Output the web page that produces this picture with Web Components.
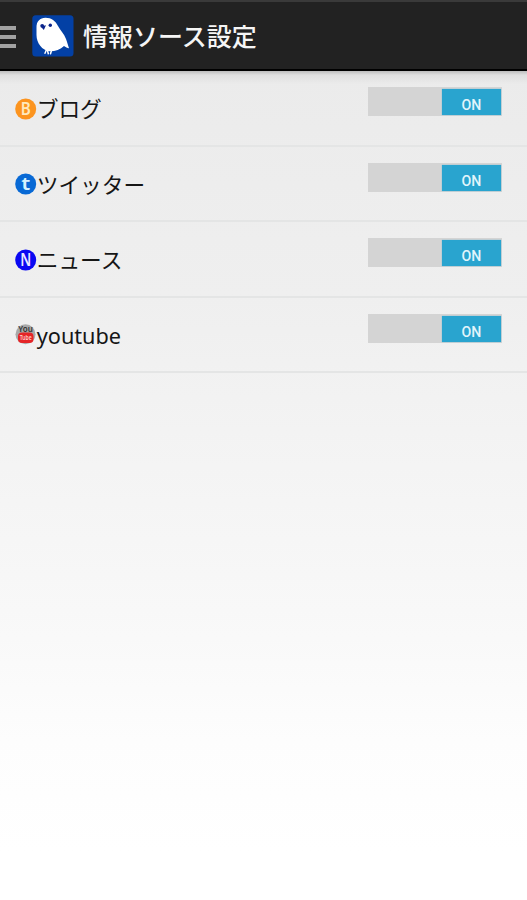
<!DOCTYPE html>
<html lang="ja">
<head>
<meta charset="utf-8">
<title>情報ソース設定</title>
<style>
html, body { margin: 0; height: 100%; }
body { font-family: "Noto Sans", "Noto Sans CJK JP", sans-serif; overflow: hidden; }
</style>
</head>
<body>
<settings-screen></settings-screen>
<script>
const define = (name, html) => customElements.define(name, class extends HTMLElement {
  constructor() {
    super();
    const t = document.createElement('template');
    t.innerHTML = html;
    this.attachShadow({ mode: 'open' }).append(t.content.cloneNode(true));
  }
});

define('app-logo', `
<style>:host{display:block;width:42px;height:42px} svg{display:block}</style>
<svg width="42" height="42" viewBox="0 0 42 42">
  <rect x=".3" y=".3" width="41.200" height="41.200" rx="3.500" fill="#0340a5"/>
  <path d="M4.500 13C4.200 6.500 8 2.800 13.500 2.800C19.500 2.800 23.500 6 26 11C28.500 15.500 32 18.500 34 24C35.200 27.500 36.200 30.500 37 33.300C35.500 33 33.500 32 32 31C28.500 34.500 23.500 36.200 18 36.200C10 35.500 4.500 28 4.500 20Z" fill="#fff"/>
  <path d="M14.300 35L13 38.200M15.500 35.500L16.300 38.800M19.500 35.500L18.500 38.800" stroke="#fff" stroke-width="1.500" stroke-linecap="round"/>
  <circle cx="10.200" cy="10.800" r="1.900" fill="#0b258c"/><circle cx="18.300" cy="10.300" r="1.700" fill="#0b258c"/>
  <path d="M8.800 11.400L14 10.200L11.800 15Z" fill="#0b258c"/>
</svg>`);

define('app-bar', `
<style>
:host{display:flex;align-items:center;box-sizing:border-box;height:71px;padding-top:1px;background:#222;border-top:2px solid #3a3a3a;border-bottom:2px solid #000;color:#f5f5f5}
.menu{width:16px;height:22px;display:flex;flex-direction:column;justify-content:space-between;margin:2px 16px 0 0}
.menu i{height:4px;background:#a2a2a2}
h1{margin:-2px 0 0 9px;font:500 25px/36px "Noto Sans CJK JP",sans-serif;white-space:nowrap}
</style>
<div class="menu"><i></i><i></i><i></i></div><app-logo></app-logo><h1><slot></slot></h1>`);

define('source-badge', `
<style>
:host{display:block;flex:none;width:22px;height:22px}
</style><slot></slot>`);

define('toggle-switch', `
<style>
:host{display:flex;box-sizing:border-box;width:134px;height:29px;background:#d4d4d4;justify-content:flex-end;padding:2px 1px 1px 0}
.thumb{box-sizing:border-box;width:59px;height:26px;background:#29a4cf;box-shadow:0 0 1px #58b4d3;color:#e2f5fb;text-align:center;font:500 14.200px/33px Roboto,sans-serif}
</style><div class="thumb"><slot></slot></div>`);

define('source-row', `
<style>
:host{display:flex;box-sizing:border-box;height:75.500px;padding:0 25px 0 15px;border-bottom:2px solid #e4e5e5;align-items:flex-start}
.icon{margin-top:26.500px}
.label{flex:1;margin:20px 0 0 -.3px;font-size:21.700px;line-height:36px;color:#161616;white-space:nowrap}
.state{margin-top:16px}
</style>
<div class="icon"><slot name="icon"></slot></div><div class="label"><slot></slot></div>
<toggle-switch class="state">ON</toggle-switch>`);

define('settings-screen', `
<style>
:host{display:flex;flex-direction:column;height:100vh}
main{flex:1;padding-top:.4px;background:linear-gradient(#bcbcbc 0,rgba(215,215,215,.6) 4px,rgba(230,230,230,0) 13px),linear-gradient(#ebebeb 0,#efefef 225px,#f3f3f3 360px,#f8f8f8 540px,#fdfdfd 670px,#fff 780px)}
svg{display:block;overflow:visible}
text{font-family:"Noto Sans",sans-serif;fill:#fff;text-anchor:middle}
</style>
<app-bar>情報ソース設定</app-bar>
<main>
<source-row><source-badge slot="icon"><svg width="22" height="22"><circle cx="10.700" cy="11" r="10.500" fill="#fc941f"/><text x="10.700" y="17" font-size="17" font-weight="600" textLength="10" lengthAdjust="spacingAndGlyphs" style="fill:#ffe9bd">B</text></svg></source-badge>ブログ</source-row>
<source-row><source-badge slot="icon"><svg width="22" height="22"><circle cx="10.700" cy="11" r="10.500" fill="#0869d5"/><text x="10.700" y="17" font-size="18" font-weight="600" textLength="9" lengthAdjust="spacingAndGlyphs" style="fill:#d6f3ff">t</text></svg></source-badge>ツイッター</source-row>
<source-row><source-badge slot="icon"><svg width="22" height="22"><circle cx="10.700" cy="11" r="10.500" fill="#0a08f2"/><text x="10.700" y="17.300" font-size="18" font-weight="600" textLength="11" lengthAdjust="spacingAndGlyphs" style="fill:#e8e8ff">N</text></svg></source-badge>ニュース</source-row>
<source-row><source-badge slot="icon"><svg width="22" height="22"><circle cx="10.500" cy="10.300" r="10" fill="#a9a9a9"/><rect x="3" y="8.500" width="15.500" height="10.500" rx="4" fill="#e52527"/><text x="10.500" y="8.400" font-size="8" font-weight="600" style="fill:#333">You</text><text x="10.700" y="16" font-size="7" font-weight="600" textLength="12" lengthAdjust="spacingAndGlyphs" style="fill:#ffd0cc">Tube</text></svg></source-badge>youtube</source-row>
</main>`);
</script>
</body>
</html>
